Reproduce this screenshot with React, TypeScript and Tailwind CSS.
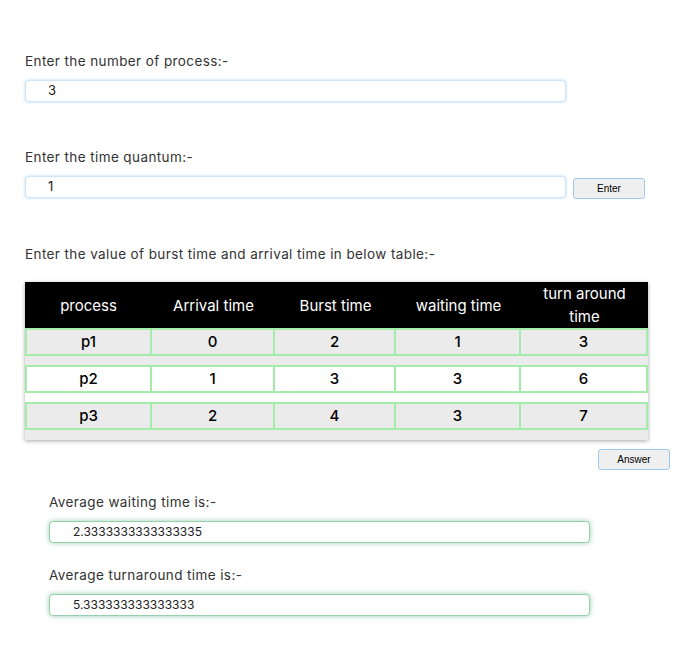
import React from 'react'

const HEADERS = ['process', 'Arrival time', 'Burst time', 'waiting time', 'turn around time'] as const

const ROWS = [
  { p: 'p1', at: 0, bt: 2, wt: 1, tat: 3 },
  { p: 'p2', at: 1, bt: 3, wt: 3, tat: 6 },
  { p: 'p3', at: 2, bt: 4, wt: 3, tat: 7 },
]

// Kolonnebredder målt fra skærmbilledet (samlet 623px)
const COLS = 'grid grid-cols-[127px_123px_121px_125px_127px]'

function BlueInput({ value }: { value: string }) {
  return (
    <div className="h-[22px] w-[541px] rounded-[4px] border border-[#cfe6fa] shadow-[0_0_3px_rgba(120,180,235,0.55)] bg-white flex items-center pl-[22px] text-[13px] text-[#222]">
      {value}
    </div>
  )
}

function GreenInput({ value }: { value: string }) {
  return (
    <div className="h-[22px] w-[541px] rounded-[4px] border border-[#98cfae] shadow-[0_0_5px_rgba(80,175,115,0.6)] bg-white flex items-center pl-[23px] text-[12px] text-[#222]">
      {value}
    </div>
  )
}

function SmallButton({ label }: { label: string }) {
  return (
    <button
      type="button"
      className="block h-[21px] w-[72px] rounded-[3px] border border-[#9ccaf0] bg-[#efefef] text-[10px] text-black font-['Liberation_Sans',sans-serif]"
    >
      {label}
    </button>
  )
}

const LABEL = 'text-[13.5px] leading-[16px] tracking-[0.4px]'

export default function App() {
  return (
    <div className="min-h-[668px] bg-white text-[#333] font-['Inter',sans-serif]">
      <div className="pl-[25px] pt-[53px]">
        <p className={LABEL}>Enter the number of process:-</p>
        <div className="mt-[11px]">
          <BlueInput value="3" />
        </div>

        <p className={`mt-[47px] ${LABEL}`}>Enter the time quantum:-</p>
        <div className="mt-[11px] flex items-start gap-[7px]">
          <BlueInput value="1" />
          <div className="pt-[2px]">
            <SmallButton label="Enter" />
          </div>
        </div>

        <p className={`mt-[47px] ${LABEL}`}>Enter the value of burst time and arrival time in below table:-</p>

        {/* Tabel med procestider */}
        <div className="mt-[20px] w-[623px] bg-[#ebebeb] shadow-[0_1px_4px_rgba(0,0,0,0.35)]">
          <div className={`${COLS} h-[46px] bg-black text-white text-[15px]`}>
            {HEADERS.map((h) => (
              <div key={h} className="flex items-center justify-center text-center leading-[23px] px-[14px]">
                {h}
              </div>
            ))}
          </div>
          {ROWS.map((r, i) => (
            <div
              key={r.p}
              className={`${i === 2 ? 'pb-[10px]' : 'pb-[9px]'} ${i === 1 ? 'bg-white' : 'bg-[#ebebeb]'}`}
            >
              <div className={`${COLS} h-[28px] text-[15px] text-black font-medium`}>
                {[r.p, r.at, r.bt, r.wt, r.tat].map((v, j) => (
                  <div
                    key={j}
                    className={`flex items-center justify-center border-2 border-[#a3eca9] ${j > 0 ? 'border-l-0' : ''}`}
                  >
                    {v}
                  </div>
                ))}
              </div>
            </div>
          ))}
        </div>

        <div className="mt-[9px] pl-[573px]">
          <SmallButton label="Answer" />
        </div>

        <div className="pl-[24px]">
          <p className={`mt-[24px] ${LABEL}`}>Average waiting time is:-</p>
          <div className="mt-[11px]">
            <GreenInput value="2.3333333333333335" />
          </div>
          <p className={`mt-[24px] ${LABEL}`}>Average turnaround time is:-</p>
          <div className="mt-[11px]">
            <GreenInput value="5.333333333333333" />
          </div>
        </div>
      </div>
    </div>
  )
}
